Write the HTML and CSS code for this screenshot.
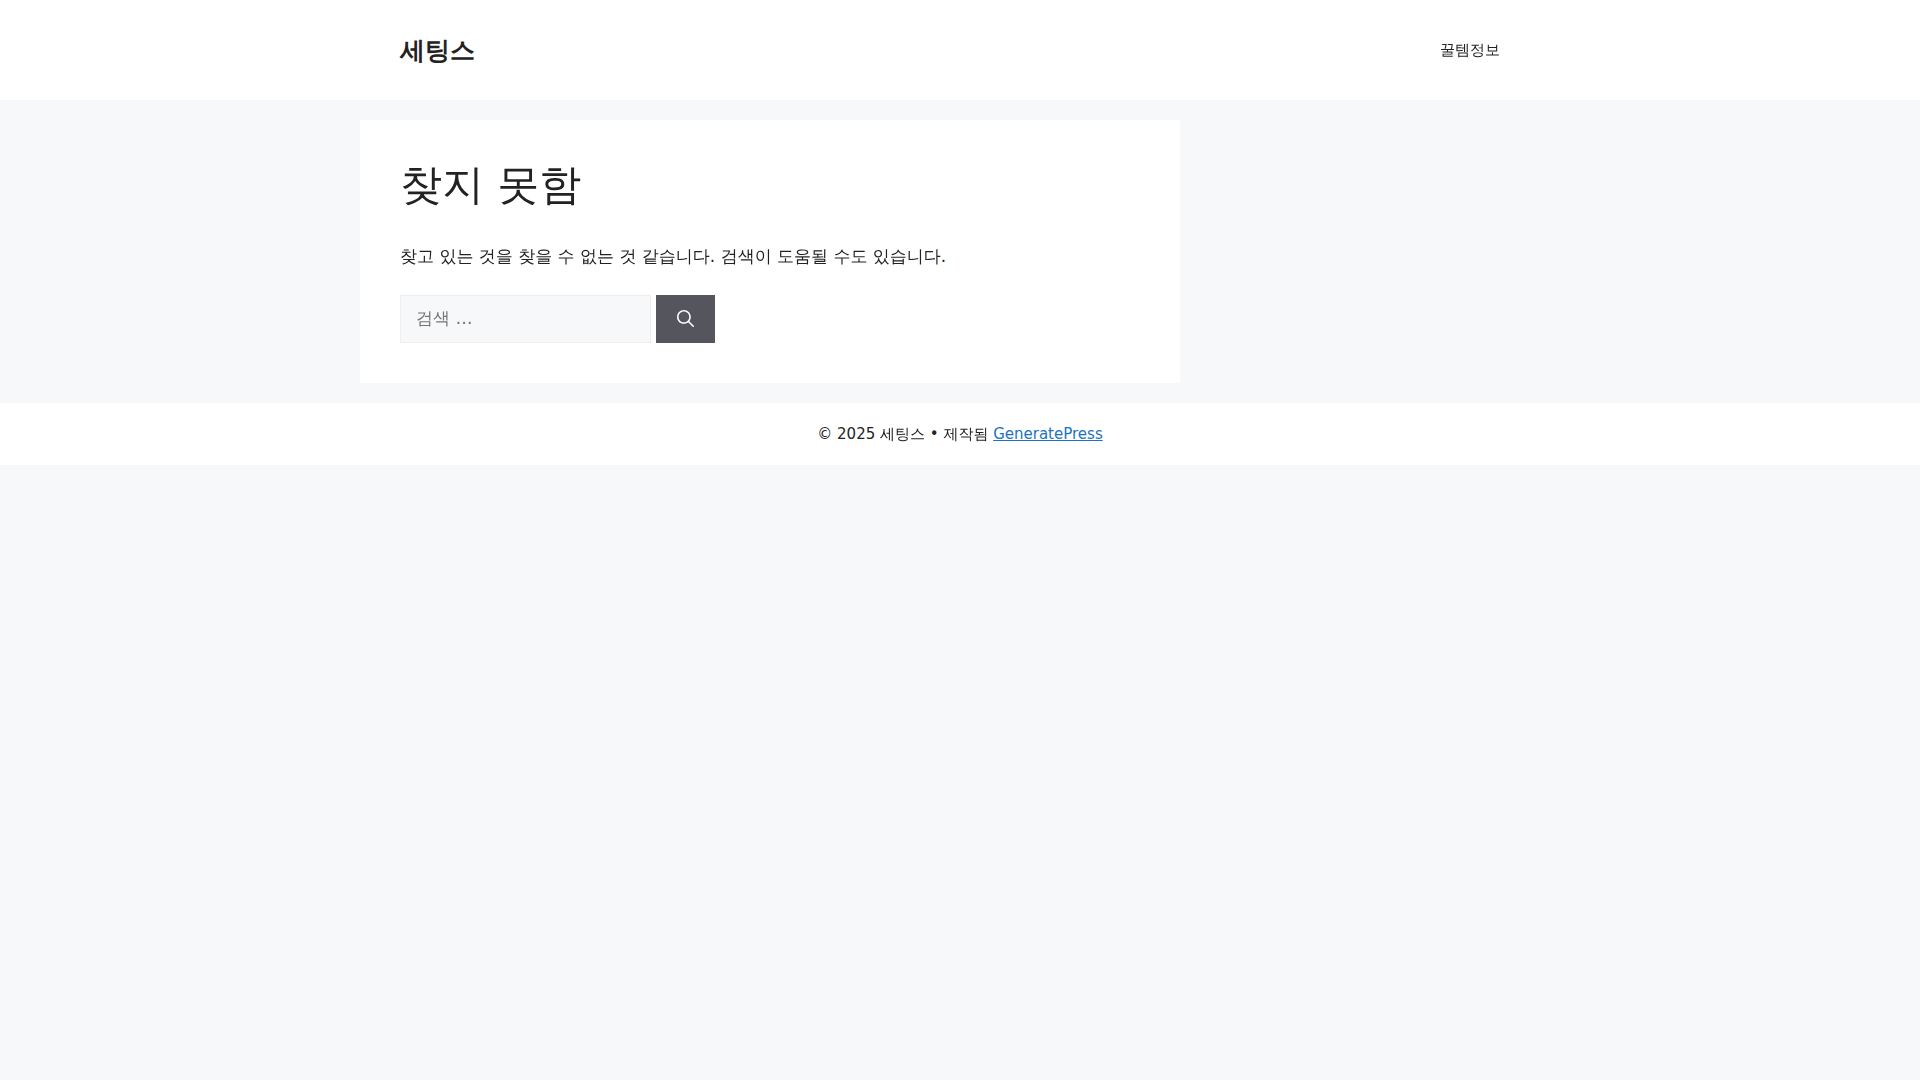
FILE: index.html
```html
<!DOCTYPE html>
<html lang="ko-KR">
<head>
  <meta charset="UTF-8">
  <meta name="viewport" content="width=device-width, initial-scale=1">
  <title>찾지 못함 - 세팅스</title>
  <link rel="stylesheet" href="styles.css">
</head>
<body>
  <header class="site-header">
    <div class="inside-header">
      <a class="main-title" href="#">세팅스</a>
      <nav class="main-nav">
        <a href="#">꿀템정보</a>
      </nav>
    </div>
  </header>

  <div class="site-content">
    <main class="content-area">
      <div class="inside-article">
        <h1>찾지 못함</h1>
        <p>찾고 있는 것을 찾을 수 없는 것 같습니다. 검색이 도움될 수도 있습니다.</p>
        <form class="search-form">
          <input type="search" class="search-field" placeholder="검색 …" aria-label="검색">
          <button type="submit" class="search-submit" aria-label="검색">
            <svg viewBox="0 0 512 512" width="17" height="17" aria-hidden="true">
              <path fill="currentColor" fill-rule="evenodd" clip-rule="evenodd" d="M208 48c-88.366 0-160 71.634-160 160s71.634 160 160 160 160-71.634 160-160S296.366 48 208 48zM0 208C0 93.125 93.125 0 208 0s208 93.125 208 208c0 48.741-16.765 93.566-44.843 129.024l133.826 134.018c9.366 9.379 9.355 24.575-.025 33.941-9.379 9.366-24.575 9.355-33.941-.025L337.238 370.987C301.747 399.167 256.839 416 208 416 93.125 416 0 322.875 0 208z"/>
            </svg>
          </button>
        </form>
      </div>
    </main>
  </div>

  <footer class="site-info">
    © 2025 세팅스 • 제작됨 <a href="#">GeneratePress</a>
  </footer>
</body>
</html>
```
FILE: styles.css
```css
* {
  box-sizing: border-box;
}
body {
  margin: 0;
  background: #f7f8f9;
  color: #222;
  font-family: "DejaVu Sans", "WenQuanYi Zen Hei", "Noto Sans CJK KR", sans-serif;
  font-size: 17px;
  line-height: 1.5;
}
.site-header {
  background: #fff;
}
.inside-header {
  display: flex;
  align-items: center;
  justify-content: space-between;
  max-width: 1200px;
  margin: 0 auto;
  padding: 20px 40px;
}
.main-title {
  color: #222;
  font-family: system-ui, sans-serif;
  font-size: 25px;
  font-weight: bold;
  text-decoration: none;
}
.main-nav a {
  display: block;
  padding: 0 20px;
  color: #222;
  font-size: 15px;
  line-height: 60px;
  text-decoration: none;
}
.site-content {
  max-width: 1200px;
  margin: 0 auto;
}
.content-area {
  width: 70%;
  padding: 20px 20px 20px 0;
}
.inside-article {
  padding: 40px;
  background: #fff;
}
h1 {
  margin: 0;
  font-size: 42px;
  font-weight: normal;
  line-height: 1.2;
}
p {
  margin: 34px 0 25px;
}
.search-form {
  display: flex;
  gap: 5px;
}
.search-field {
  width: 251px;
  padding: 10px 15px;
  border: 1px solid #eee;
  border-radius: 0;
  background: #f7f8f9;
  color: #222;
  font: inherit;
}
.search-field::placeholder {
  color: #757575;
}
.search-submit {
  display: flex;
  align-items: center;
  justify-content: center;
  width: 59px;
  height: 48px;
  padding: 0;
  border: none;
  background: #55555e;
  color: #fff;
  cursor: pointer;
}
.search-submit:hover {
  background: #3f4047;
}
.site-info {
  padding: 20px;
  background: #fff;
  font-size: 15px;
  line-height: 22px;
  text-align: center;
}
.site-info a {
  color: #1e73be;
}
```
